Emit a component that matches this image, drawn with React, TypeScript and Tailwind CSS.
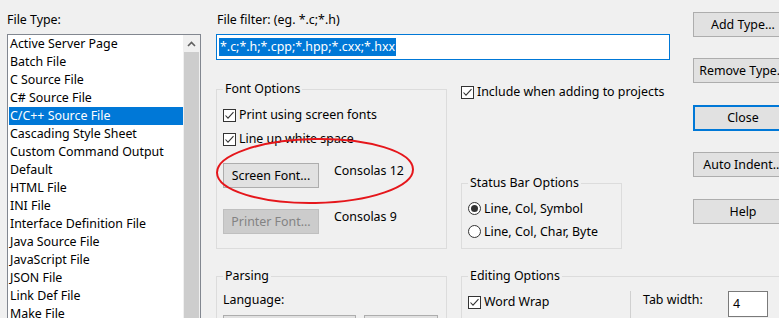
import React from 'react';

const fileTypes = [
  'Active Server Page',
  'Batch File',
  'C Source File',
  'C# Source File',
  'C/C++ Source File',
  'Cascading Style Sheet',
  'Custom Command Output',
  'Default',
  'HTML File',
  'INI File',
  'Interface Definition File',
  'Java Source File',
  'JavaScript File',
  'JSON File',
  'Link Def File',
  'Make File',
];

const CheckBox: React.FC<{ checked?: boolean }> = ({ checked }) => (
  <svg width="13" height="13" viewBox="0 0 13 13" className="shrink-0">
    <rect x="0.5" y="0.5" width="12" height="12" fill="#fff" stroke="#333" />
    {checked && <path d="M2.5 6.5 L5 9.2 L10.5 3.2" fill="none" stroke="#333" strokeWidth="1.1" />}
  </svg>
);

const Radio: React.FC<{ checked?: boolean }> = ({ checked }) => (
  <svg width="13" height="13" viewBox="0 0 13 13" className="shrink-0">
    <circle cx="6.5" cy="6.5" r="6" fill="#fff" stroke="#333" />
    {checked && <circle cx="6.5" cy="6.5" r="3.5" fill="#333" />}
  </svg>
);

const Group: React.FC<{ title: string; className?: string; children: React.ReactNode }> = ({ title, className, children }) => (
  <fieldset className={`border border-[#dcdcdc] ${className ?? ''}`}>
    <legend className="ml-[6px] px-[2px] leading-[16px]">{title}</legend>
    {children}
  </fieldset>
);

const Button: React.FC<{ label: string; className?: string; disabled?: boolean }> = ({ label, className, disabled }) => (
  <div
    className={`h-[25px] shrink-0 flex items-center justify-center leading-[16px] whitespace-nowrap ${
      disabled ? 'bg-[#cccccc] border border-[#bfbfbf] text-[#838383]' : 'bg-[#e1e1e1] border border-[#adadad]'
    } ${className ?? ''}`}
  >
    {label}
  </div>
);

export default function App() {
  return (
    <div className="relative w-[779px] h-[318px] overflow-hidden bg-[#f0f0f0] text-black text-[12.4px] flex font-['Noto_Sans','Microsoft_YaHei',sans-serif]">
      {/* file type list */}
      <div className="w-[216px] shrink-0 pl-[7px] flex flex-col">
        <div className="pt-[12px] leading-[16px] h-[34px] shrink-0">File Type:</div>
        <div className="w-[194px] h-[300px] shrink-0 border border-[#828790] bg-white flex">
          <div className="flex-1 pl-[1px]">
            {fileTypes.map((t) => (
              <div
                key={t}
                className={`h-[18px] leading-[18px] pl-[1px] whitespace-nowrap ${
                  t === 'C/C++ Source File' ? 'bg-[#0078d7] text-white' : ''
                }`}
              >
                {t}
              </div>
            ))}
          </div>
          <div className="w-[17px] flex flex-col bg-[#f0f0f0]">
            <div className="h-[17px] flex items-center justify-center">
              <svg width="9" height="6" viewBox="0 0 9 6">
                <path d="M1 5 L4.5 1.5 L8 5" fill="none" stroke="#606060" strokeWidth="1.6" />
              </svg>
            </div>
            <div className="flex-1 mx-[1px] bg-[#cdcdcd]" />
          </div>
        </div>
      </div>

      {/* right side */}
      <div className="flex-1 flex flex-col">
        <div className="h-[268px] flex shrink-0">
          <div className="w-[454px] shrink-0 flex flex-col">
            <div className="pt-[12px] pl-[1px] leading-[16px] h-[34px] shrink-0">File filter: (eg. *.c;*.h)</div>
            <div className="h-[26px] shrink-0 border border-[#0078d7] bg-white flex items-center pl-[2px]">
              <span className="bg-[#0078d7] text-white leading-[18px] px-[1px]">*.c;*.h;*.cpp;*.hpp;*.cxx;*.hxx</span>
            </div>
            <div className="flex mt-[21px]">
              <Group title="Font Options" className="w-[231px] h-[168px] shrink-0">
                <div className="pl-[6px] pt-[6px]">
                  <div className="h-[24px] flex items-center gap-[3px]">
                    <CheckBox checked />
                    <span className="leading-[16px]">Print using screen fonts</span>
                  </div>
                  <div className="h-[24px] flex items-center gap-[3px]">
                    <CheckBox checked />
                    <span className="leading-[16px]">Line up white space</span>
                  </div>
                  <div className="flex items-start mt-[12px]">
                    <Button label="Screen Font..." className="w-[96px]" />
                    <span className="ml-[15px] leading-[16px]">Consolas 12</span>
                  </div>
                  <div className="flex items-start mt-[21px]">
                    <Button label="Printer Font..." className="w-[96px]" disabled />
                    <span className="ml-[15px] leading-[16px]">Consolas 9</span>
                  </div>
                </div>
              </Group>
              <div className="ml-[14px] flex flex-col">
                <div className="mt-[3px] h-[16px] flex items-center gap-[3px] whitespace-nowrap">
                  <CheckBox checked />
                  <span className="leading-[16px]">Include when adding to projects</span>
                </div>
                <Group title="Status Bar Options" className="mt-[75px] w-[161px] h-[74px]">
                  <div className="pl-[6px] pt-[6px]">
                    <div className="h-[23px] flex items-center gap-[3px]">
                      <Radio checked />
                      <span className="leading-[16px]">Line, Col, Symbol</span>
                    </div>
                    <div className="h-[23px] flex items-center gap-[3px]">
                      <Radio />
                      <span className="leading-[16px]">Line, Col, Char, Byte</span>
                    </div>
                  </div>
                </Group>
              </div>
            </div>
          </div>
          <div className="ml-[23px] w-[100px] shrink-0 flex flex-col">
            <Button label="Add Type..." className="mt-[12px]" />
            <Button label="Remove Type..." className="mt-[21px]" />
            <div className="mt-[22px] h-[26px] shrink-0 border-2 border-[#0078d7] bg-[#e1e1e1] flex items-center justify-center leading-[16px]">
              Close
            </div>
            <Button label="Auto Indent..." className="mt-[21px]" />
            <Button label="Help" className="mt-[22px]" />
          </div>
        </div>

        <div className="flex">
          <Group title="Parsing" className="w-[231px] h-[80px] shrink-0">
            <div className="pl-[6px] pt-[8px]">
              <div className="leading-[16px]">Language:</div>
              <div className="flex mt-[7px] gap-[8px]">
                <div className="w-[133px] h-[23px] bg-[#e1e1e1] border border-[#adadad]" />
                <div className="w-[74px] h-[23px] bg-[#e1e1e1] border border-[#adadad]" />
              </div>
            </div>
          </Group>
          <Group title="Editing Options" className="ml-[14px] w-[340px] h-[80px] shrink-0">
            <div className="flex">
              <div className="w-[168px] pl-[6px] pt-[10px] shrink-0">
                <div className="h-[16px] flex items-center gap-[3px]">
                  <CheckBox checked />
                  <span className="leading-[16px]">Word Wrap</span>
                </div>
              </div>
              <div className="mt-[7px] border-l border-[#d0d0d0] h-[40px] flex items-start">
                <span className="ml-[12px] mt-[1px] leading-[16px] w-[85px]">Tab width:</span>
                <div className="w-[40px] h-[26px] border border-[#7a7a7a] bg-white flex items-center pl-[4px] leading-[16px]">4</div>
              </div>
            </div>
          </Group>
        </div>
      </div>

      {/* red annotation ellipse */}
      <svg className="absolute left-[214px] top-[137px]" width="204" height="70" viewBox="0 0 204 70">
        <ellipse cx="101" cy="34" rx="98" ry="32" fill="none" stroke="#e5161b" strokeWidth="2" transform="rotate(-1 101 34)" />
      </svg>
    </div>
  );
}
